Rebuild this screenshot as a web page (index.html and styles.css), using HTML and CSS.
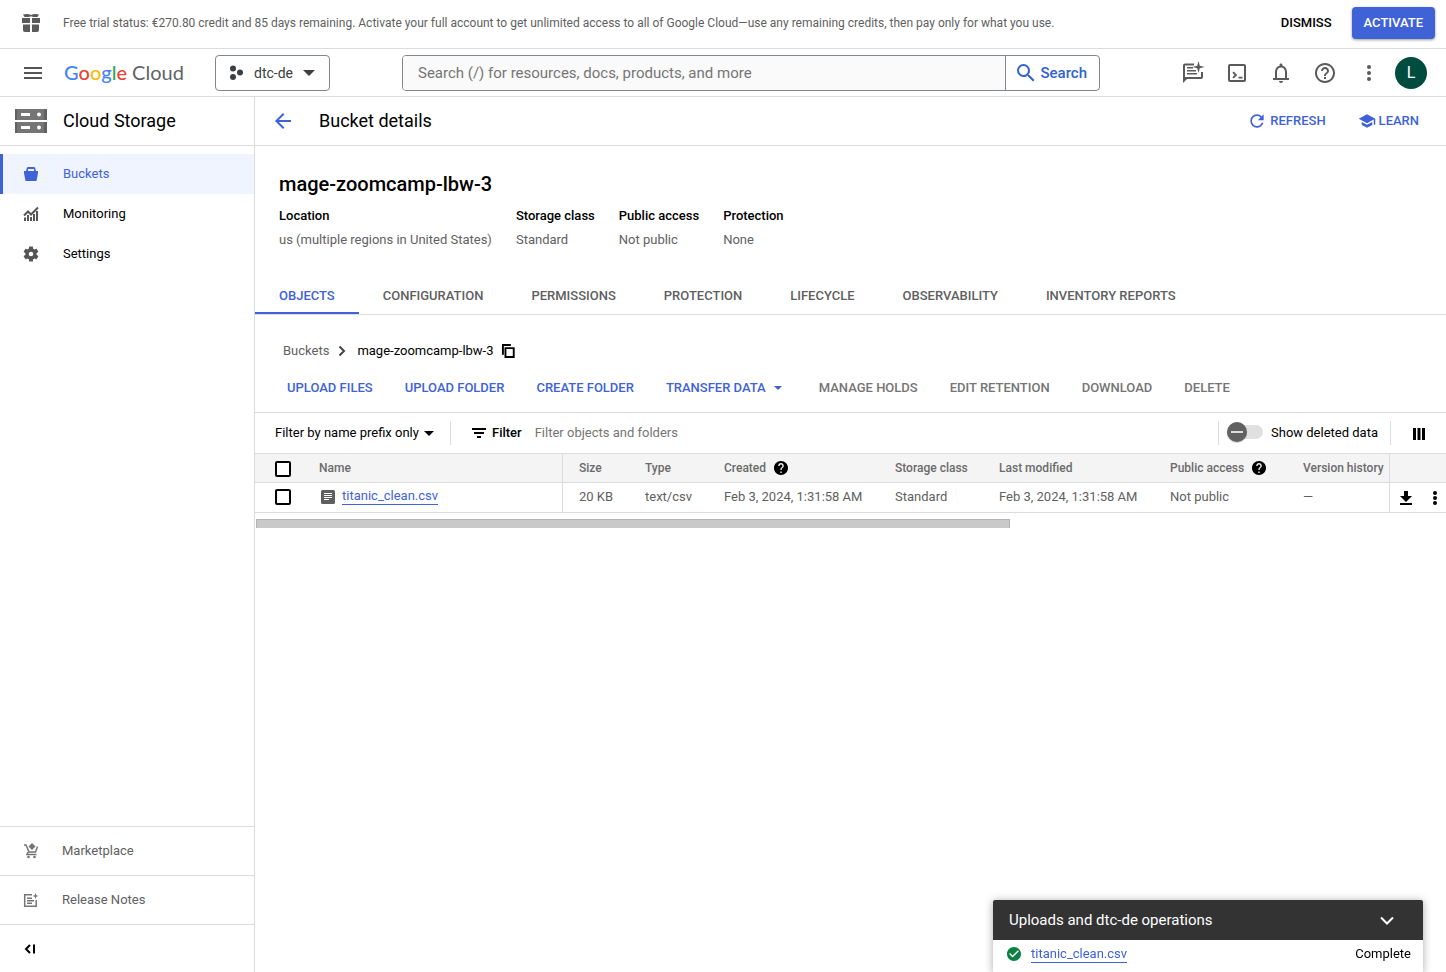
FILE: index.html
```
<!DOCTYPE html>
<html lang="en">
<head>
<meta charset="utf-8">
<title>Bucket details – Cloud Storage</title>
<link rel="stylesheet" href="styles.css">
</head>
<body>
<div class="trial">
  <svg class="trial-icon" viewBox="0 0 20 20" aria-hidden="true"><path d="M1 5h8v5H1zM11 5h8v5h-8zM2 11.500h7V19H4a2 2 0 0 1-2-2zM11 11.500h7V17a2 2 0 0 1-2 2h-5zM2 1.500C5 .6 8 .8 10 2 12 .8 15 .6 18 1.500L16.500 4C14 4.200 12 4 10 3.200 8 4 6 4.200 3.500 4z"/></svg>
  <p class="trial-text">Free trial status: €270.80 credit and 85 days remaining. Activate your full account to get unlimited access to all of Google Cloud—use any remaining credits, then pay only for what you use.</p>
  <button class="btn btn-dismiss" type="button">DISMISS</button>
  <button class="btn btn-activate" type="button">ACTIVATE</button>
</div>

<header class="topbar">
  <button class="icon-btn menu-btn" type="button" aria-label="Main menu"><svg class="i24" viewBox="0 0 24 24"><path d="M3 18h18v-2H3v2zm0-5h18v-2H3v2zm0-7v2h18V6H3z"/></svg></button>
  <a class="logo" href="#" aria-label="Google Cloud"><span class="g-blue">G</span><span class="g-red">o</span><span class="g-yellow">o</span><span class="g-blue">g</span><span class="g-green">l</span><span class="g-red">e</span> <span class="g-cloud">Cloud</span></a>
  <button class="project" type="button">
    <svg class="i16" viewBox="0 0 16 16"><circle cx="4" cy="3.500" r="3"/><circle cx="4" cy="12" r="3"/><circle cx="11" cy="7.500" r="3"/></svg>
    <span>dtc-de</span>
    <svg class="caret-lg" viewBox="0 0 12 6"><path d="M0 0h12L6 6z"/></svg>
  </button>
  <form class="search">
    <input class="search-input" type="text" aria-label="Search" placeholder="Search (/) for resources, docs, products, and more">
    <button class="search-btn" type="button"><svg class="i24" viewBox="0 0 24 24"><path d="M15.500 14h-.79l-.28-.27A6.470 6.470 0 0 0 16 9.500 6.500 6.500 0 1 0 9.500 16c1.610 0 3.090-.59 4.230-1.570l.27.28v.79l5 4.990L20.490 19l-4.990-5zm-6 0C7.010 14 5 11.990 5 9.500S7.010 5 9.500 5 14 7.010 14 9.500 11.990 14 9.500 14z"/></svg>Search</button>
  </form>
  <div class="tools">
    <button class="icon-btn" type="button" aria-label="Chat"><svg class="i24" viewBox="0 0 24 24"><path d="M13 2.500H4a2 2 0 0 0-2 2V22l4-4h14a2 2 0 0 0 2-2v-5h-2v5H4V4.500h9zM6 6h6v1.500H6zM6 9h9v1.500H6zM6 12h10v1.500H6zM17.500 0l1.300 4.700L23.500 6l-4.700 1.300L17.500 12l-1.300-4.700L11.500 6l4.700-1.300z"/></svg></button>
    <button class="icon-btn" type="button" aria-label="Cloud Shell"><svg class="i24" viewBox="0 0 24 24"><path d="M19 3H5a2 2 0 0 0-2 2v14a2 2 0 0 0 2 2h14a2 2 0 0 0 2-2V5a2 2 0 0 0-2-2zm0 16H5V5h14zM7.400 16.300 9.600 14l-2.200-2.300L8.800 10.500 12.200 14l-3.400 3.500zM13.500 15.800h4v1.700h-4z"/></svg></button>
    <button class="icon-btn" type="button" aria-label="Notifications"><svg class="i24" viewBox="0 0 24 24"><path d="M12 22c1.100 0 2-.9 2-2h-4c0 1.100.9 2 2 2zm6-5v-6c0-3.070-1.630-5.640-4.500-6.320V4c0-.83-.67-1.500-1.500-1.500s-1.500.67-1.500 1.500v.68C7.640 5.360 6 7.920 6 11v6H4v2h16v-2zm-2 0H8v-6c0-2.480 1.510-4.500 4-4.500s4 2.020 4 4.500v6z"/></svg></button>
    <button class="icon-btn" type="button" aria-label="Help"><svg class="i24" viewBox="0 0 24 24"><path d="M11 18h2v-2h-2v2zm1-16C6.480 2 2 6.480 2 12s4.480 10 10 10 10-4.480 10-10S17.520 2 12 2zm0 18c-4.410 0-8-3.590-8-8s3.590-8 8-8 8 3.590 8 8-3.590 8-8 8zm0-14c-2.210 0-4 1.790-4 4h2c0-1.100.9-2 2-2s2 .9 2 2c0 2-3 1.750-3 5h2c0-2.250 3-2.500 3-5 0-2.210-1.790-4-4-4z"/></svg></button>
    <button class="icon-btn" type="button" aria-label="More options"><svg class="i24" viewBox="0 0 24 24"><circle cx="12" cy="6" r="2"/><circle cx="12" cy="12" r="2"/><circle cx="12" cy="18" r="2"/></svg></button>
    <button class="avatar" type="button" aria-label="Account">L</button>
  </div>
</header>

<div class="shell">
  <aside class="side">
    <div class="side-head">
      <svg class="product-icon" viewBox="0 0 32 24" aria-hidden="true"><path fill="#757575" d="M0 0h32v11H0zM0 13h32v11H0z"/><path fill="#616161" d="M0 0h2v11H0zM0 13h2v11H0zM29 0h3v11h-3zM29 13h3v11h-3z"/><path fill="#fff" d="M6 4h9v3H6zM6 17h9v3H6z"/><circle fill="#fff" cx="24" cy="5.500" r="2"/><circle fill="#fff" cx="24" cy="18.500" r="2"/></svg>
      <h2 class="bar-title">Cloud Storage</h2>
    </div>
    <nav class="side-nav">
      <a class="side-link active" href="#"><svg class="i16" viewBox="0 0 16 16"><path d="M4 1.500 5 1h6l1 .5L13 5h2v2l-1.500 8h-11L1 7V5h2zM5 3v2h6V3z" fill-rule="evenodd"/></svg>Buckets</a>
      <a class="side-link" href="#"><svg class="i16" viewBox="0 0 16 16"><path d="M1 11.500h2V15H1zM4 9h2v6H4zM7 11h2v4H7zM10 8h2v7h-2zM13 5h2v10h-2z"/><path class="line2" d="M1 9.500 5 5.500l3 3 7-7"/></svg>Monitoring</a>
      <a class="side-link" href="#"><svg class="i18" viewBox="0 0 24 24"><path d="M19.430 12.980c.04-.32.07-.64.07-.98s-.03-.66-.07-.98l2.110-1.650c.19-.15.24-.42.12-.64l-2-3.460c-.12-.22-.39-.3-.61-.22l-2.490 1c-.52-.4-1.080-.73-1.690-.98l-.38-2.650A.49.49 0 0 0 14 2h-4c-.25 0-.46.18-.49.42l-.38 2.650c-.61.25-1.170.59-1.690.98l-2.490-1c-.23-.09-.49 0-.61.22l-2 3.460c-.13.22-.07.49.12.64l2.110 1.650c-.04.32-.07.65-.07.98s.03.66.07.98l-2.110 1.650c-.19.15-.24.42-.12.64l2 3.460c.12.22.39.3.61.22l2.490-1c.52.4 1.080.73 1.690.98l.38 2.650c.03.24.24.42.49.42h4c.25 0 .46-.18.49-.42l.38-2.650c.61-.25 1.170-.59 1.690-.98l2.490 1c.23.09.49 0 .61-.22l2-3.460c.12-.22.07-.49-.12-.64zM12 15a3 3 0 1 1 0-6 3 3 0 0 1 0 6z"/></svg>Settings</a>
    </nav>
    <div class="side-foot">
      <a class="foot-link" href="#"><svg class="i16" viewBox="0 0 16 16"><path class="line" d="M1 2h2l3 7h6.500l2-5.500M5 9l-1 2.500h9.500"/><circle cx="5.500" cy="14" r="1.300"/><circle cx="11.500" cy="14" r="1.300"/><path d="M9 0l3.500 3.500L9 7 5.500 3.500z"/></svg>Marketplace</a>
      <a class="foot-link" href="#"><svg class="i16" viewBox="0 0 16 16"><path class="line" d="M9 2.700H1.700v11.600h11.500V8"/><path d="M4 5.500h5V7H4zM4 8h7v1.500H4zM4 10.500h5V12H4zM12.500 1l.8 2.200 2.200.8-2.200.8-.8 2.200-.8-2.200L9.500 4l2.200-.8z"/></svg>Release Notes</a>
      <button class="foot-link collapse" type="button" aria-label="Collapse menu"><svg class="i16" viewBox="0 0 16 16"><path class="line2" d="M7 4 3 8l4 4M11 3.500v9"/></svg></button>
    </div>
  </aside>

  <main class="main">
    <div class="page-head">
      <button class="icon-btn back" type="button" aria-label="Back"><svg class="i24" viewBox="0 0 24 24"><path d="M20 11H7.830l5.590-5.590L12 4l-8 8 8 8 1.410-1.410L7.830 13H20v-2z"/></svg></button>
      <h1 class="bar-title">Bucket details</h1>
      <div class="page-tools">
        <button class="btn head-btn" type="button"><svg class="i20" viewBox="0 0 24 24"><path d="M17.650 6.350C16.200 4.900 14.210 4 12 4c-4.420 0-7.990 3.580-7.990 8s3.570 8 7.990 8c3.730 0 6.840-2.550 7.730-6h-2.080c-.82 2.330-3.040 4-5.650 4-3.310 0-6-2.690-6-6s2.690-6 6-6c1.660 0 3.140.69 4.220 1.780L13 11h7V4l-2.350 2.350z"/></svg>REFRESH</button>
        <button class="btn head-btn" type="button"><svg class="i18" viewBox="0 0 24 24"><path d="M5 13.180v4L12 21l7-3.820v-4L12 17l-7-3.820zM12 3L1 9l11 6 9-4.910V17h2V9L12 3z"/></svg>LEARN</button>
      </div>
    </div>

    <section class="summary">
      <h2 class="bucket-name">mage-zoomcamp-lbw-3</h2>
      <dl class="facts">
        <div><dt>Location</dt><dd>us (multiple regions in United States)</dd></div>
        <div><dt>Storage class</dt><dd>Standard</dd></div>
        <div><dt>Public access</dt><dd>Not public</dd></div>
        <div><dt>Protection</dt><dd>None</dd></div>
      </dl>
    </section>

    <nav class="tabs">
      <a class="tab active" href="#">OBJECTS</a>
      <a class="tab" href="#">CONFIGURATION</a>
      <a class="tab" href="#">PERMISSIONS</a>
      <a class="tab" href="#">PROTECTION</a>
      <a class="tab" href="#">LIFECYCLE</a>
      <a class="tab" href="#">OBSERVABILITY</a>
      <a class="tab" href="#">INVENTORY REPORTS</a>
    </nav>

    <div class="crumbs">
      <a class="crumb" href="#">Buckets</a>
      <svg class="chev" viewBox="0 0 8 12"><path class="line2" d="M1.500 1.500 6 6l-4.500 4.500"/></svg>
      <span>mage-zoomcamp-lbw-3</span>
      <button class="icon-btn copy" type="button" aria-label="Copy"><svg class="i14" viewBox="1 1 21 22"><path d="M16 1H2v17h3V4h11zM6 6v17h16V6zm3 3h10v11H9z" fill-rule="evenodd"/></svg></button>
    </div>

    <div class="actions">
      <button class="btn action" type="button">UPLOAD FILES</button>
      <button class="btn action" type="button">UPLOAD FOLDER</button>
      <button class="btn action" type="button">CREATE FOLDER</button>
      <button class="btn action" type="button">TRANSFER DATA<svg class="caret-sm" viewBox="0 0 8 4"><path d="M0 0h8L4 4z"/></svg></button>
      <button class="btn action" type="button" disabled>MANAGE HOLDS</button>
      <button class="btn action" type="button" disabled>EDIT RETENTION</button>
      <button class="btn action" type="button" disabled>DOWNLOAD</button>
      <button class="btn action" type="button" disabled>DELETE</button>
    </div>

    <div class="filterbar">
      <div class="prefix">
        <select class="prefix-select" aria-label="Filter mode"><option>Filter by name prefix only</option></select>
        <svg class="caret-md" viewBox="0 0 10 5"><path d="M0 0h10L5 5z"/></svg>
      </div>
      <label class="filter-label" for="filter"><svg class="i14" viewBox="0 0 14 12"><path d="M0 1h14v2H0zM2 5h10v2H2zM5 9h4v2H5z"/></svg>Filter</label>
      <input class="filter-input" id="filter" type="text" placeholder="Filter objects and folders">
      <label class="toggle"><input class="switch" type="checkbox">Show deleted data</label>
      <button class="icon-btn columns" type="button" aria-label="Column display options"><svg class="i12" viewBox="0 0 12 12"><path d="M0 0h3v12H0zM4.500 0h3v12h-3zM9 0h3v12H9z"/></svg></button>
    </div>

    <table class="grid">
      <colgroup><col class="c-check"><col><col class="c-size"><col class="c-type"><col class="c-date"><col class="c-class"><col class="c-date"><col class="c-access"><col class="c-version"><col class="c-act"></colgroup>
      <thead>
        <tr>
          <th class="check-cell"><input class="check" type="checkbox" aria-label="Select all"></th>
          <th class="name-cell">Name</th><th>Size</th><th>Type</th>
          <th><span class="with-help">Created <svg class="i16" viewBox="2 2 20 20"><path d="M12 2C6.480 2 2 6.480 2 12s4.480 10 10 10 10-4.480 10-10S17.520 2 12 2zm1 17h-2v-2h2v2zm2.070-7.750l-.9.92C13.450 12.900 13 13.500 13 15h-2v-.5c0-1.100.45-2.100 1.170-2.830l1.240-1.260c.37-.36.59-.86.59-1.410 0-1.100-.9-2-2-2s-2 .9-2 2H8c0-2.210 1.790-4 4-4s4 1.790 4 4c0 .88-.36 1.680-.93 2.250z"/></svg></span></th>
          <th>Storage class</th><th>Last modified</th>
          <th><span class="with-help">Public access <svg class="i16" viewBox="2 2 20 20"><path d="M12 2C6.480 2 2 6.480 2 12s4.480 10 10 10 10-4.480 10-10S17.520 2 12 2zm1 17h-2v-2h2v2zm2.070-7.750l-.9.92C13.450 12.900 13 13.500 13 15h-2v-.5c0-1.100.45-2.100 1.170-2.830l1.240-1.260c.37-.36.59-.86.59-1.410 0-1.100-.9-2-2-2s-2 .9-2 2H8c0-2.210 1.790-4 4-4s4 1.790 4 4c0 .88-.36 1.680-.93 2.250z"/></svg></span></th>
          <th class="last-cell">Version history</th><th></th>
        </tr>
      </thead>
      <tbody>
        <tr>
          <td class="check-cell"><input class="check" type="checkbox" aria-label="Select titanic_clean.csv"></td>
          <td class="name-cell"><span class="file"><svg class="i14" viewBox="0 0 14 14"><rect width="14" height="14" rx="1.500"/><path fill="#fff" d="M3 3h8v1H3zM3 5h8v1H3zM3 7h8v1H3zM3 9h5v1H3z"/></svg><a class="link" href="#">titanic_clean.csv</a></span></td>
          <td>20 KB</td><td>text/csv</td><td>Feb 3, 2024, 1:31:58 AM</td><td>Standard</td><td>Feb 3, 2024, 1:31:58 AM</td><td>Not public</td><td class="last-cell">—</td>
          <td class="act-cell"><span class="acts"><button class="icon-btn" type="button" aria-label="Download"><svg class="i14" viewBox="0 0 14 14"><path d="M5 0h4v5h4l-6 6-6-6h4zM1 12h12v2H1z"/></svg></button><button class="icon-btn" type="button" aria-label="More actions"><svg class="dots" viewBox="0 0 4 14"><circle cx="2" cy="2" r="2"/><circle cx="2" cy="7" r="2"/><circle cx="2" cy="12" r="2"/></svg></button></span></td>
        </tr>
      </tbody>
    </table>
    <div class="hscroll"><div class="hthumb"></div></div>
  </main>
</div>

<section class="ops" aria-label="Operations">
  <div class="ops-head"><h2 class="ops-title">Uploads and dtc-de operations</h2><button class="icon-btn" type="button" aria-label="Minimize"><svg class="ops-chev" viewBox="0 0 14 9"><path class="line2" d="M1 1.500l6 6 6-6"/></svg></button></div>
  <div class="ops-row"><svg class="ok" viewBox="2 2 20 20"><path d="M12 2C6.480 2 2 6.480 2 12s4.480 10 10 10 10-4.480 10-10S17.520 2 12 2zm-2 15l-5-5 1.410-1.410L10 14.170l7.590-7.590L19 8l-9 9z"/></svg><a class="link" href="#">titanic_clean.csv</a><span class="ops-state">Complete</span></div>
</section>
</body>
</html>
```
FILE: styles.css
```
* { box-sizing: border-box; }
body {
  margin: 0;
  min-height: 100vh;
  display: flex;
  flex-direction: column;
  background: #fff;
  color: #000;
  font: 13px/20px Roboto, "Liberation Sans", sans-serif;
}
h1, h2, p, dl, dd { margin: 0; }
a { color: inherit; text-decoration: none; }
button, input, select { font: inherit; color: inherit; }
button { border: 0; padding: 0; background: none; }
svg { display: block; flex: none; fill: currentColor; }
.line, .line2 { fill: none; stroke: currentColor; stroke-width: 1.5; }
.line2 { stroke-width: 2; }
.i12 { width: 12px; height: 12px; }
.i14 { width: 14px; height: 14px; }
.i16 { width: 16px; height: 16px; }
.i18 { width: 18px; height: 18px; }
.i20 { width: 20px; height: 20px; }
.i24 { width: 24px; height: 24px; }
.icon-btn { display: flex; align-items: center; justify-content: center; }
.btn { font-weight: 500; white-space: nowrap; }

.trial {
  display: flex;
  align-items: center;
  height: 49px;
  padding: 0 11px 3px 21px;
  border-bottom: 1px solid #dadce0;
}
.trial-icon { width: 20px; height: 20px; color: #5a5a5a; }
.trial-text { flex: 1; margin-left: 22px; font-size: 12px; color: #5f5f5f; }
.btn-dismiss { padding: 0 20px; }
.btn-activate {
  height: 32px;
  padding: 0 12px;
  border-radius: 4px;
  background: #3f62d7;
  color: #fff;
  box-shadow: 0 1px 3px rgba(0, 0, 0, .4);
}

.topbar {
  display: flex;
  align-items: center;
  height: 48px;
  padding: 0 19px 0 21px;
  border-bottom: 1px solid #dadce0;
}
.menu-btn { color: #555; }
.logo { width: 151px; padding: 0 0 2px 19px; font: 500 20px/24px Lato, sans-serif; white-space: nowrap; }
.g-blue { color: #4285f4; }
.g-red { color: #ea4335; }
.g-yellow { color: #fbbc04; }
.g-green { color: #34a853; }
.g-cloud { color: #5f6368; font-weight: 400; }
.project {
  display: flex;
  align-items: center;
  gap: 9px;
  height: 36px;
  margin-left: 19px;
  padding: 0 14px 0 13px;
  border: 1px solid #80868b;
  border-radius: 4px;
  font-size: 14px;
  color: #3c4043;
}
.caret-lg { width: 12px; height: 6px; margin-left: 1px; }
.search {
  display: flex;
  flex: 0 1 698px;
  height: 36px;
  margin-left: 72px;
  border: 1px solid #80868b;
  border-radius: 4px;
  overflow: hidden;
}
.search-input { flex: 1; min-width: 0; padding: 0 15px; border: 0; background: #fafafa; font-size: 15px; }
.search-input::placeholder, .filter-input::placeholder { color: #757575; opacity: 1; }
.search-btn {
  display: flex;
  align-items: center;
  gap: 2px;
  padding: 0 12px 0 8px;
  border-left: 1px solid #80868b;
  font-size: 15px;
  font-weight: 500;
  color: #2f62d0;
}
.tools { display: flex; align-items: center; gap: 20px; margin-left: auto; color: #5a5a5a; }
.avatar { width: 32px; height: 32px; margin-left: -6px; border-radius: 50%; background: #004d40; color: #fff; font-size: 16px; }

.shell { display: grid; grid-template-columns: 255px minmax(0, 1fr); flex: 1; }
.side { display: flex; flex-direction: column; border-right: 1px solid #dadce0; }
.side-head, .page-head { display: flex; align-items: center; height: 49px; border-bottom: 1px solid #dadce0; }
.side-head { gap: 16px; padding-left: 15px; }
.product-icon { width: 32px; height: 24px; }
.bar-title { font-size: 18px; line-height: 24px; font-weight: 400; }
.side-nav { padding-top: 8px; }
.side-link { display: grid; grid-template-columns: 20px auto; justify-content: start; justify-items: center; align-items: center; gap: 22px; height: 40px; padding-left: 21px; }
.side-link svg { color: #555; }
.side-link.active { padding-left: 18px; border-left: 3px solid #3f62d7; background: #eff4fe; color: #3f62d7; }
.side-link.active svg { color: inherit; }
.side-foot { margin-top: auto; color: #616161; }
.foot-link { display: flex; align-items: center; gap: 23px; width: 100%; height: 49px; padding-left: 23px; border-top: 1px solid #dadce0; }
.foot-link svg { color: #757575; }
.foot-link.collapse { height: 48px; }
.foot-link.collapse svg { color: #000; }

.page-head { padding: 0 27px 0 16px; }
.back { margin-right: 24px; }
.back, .head-btn { color: #3f62d7; }
.page-tools { display: flex; gap: 32px; margin-left: auto; }
.head-btn { display: flex; align-items: center; gap: 3px; }

.summary { padding: 26px 24px 0; }
.bucket-name { font-size: 20px; line-height: 24px; font-weight: 500; }
.facts { display: flex; gap: 24px; margin-top: 10px; }
.facts dt { font-weight: 500; margin-bottom: 4px; }
.facts dd { color: #616161; }

.tabs { display: flex; margin-top: 27px; border-bottom: 1px solid #dadce0; }
.tab { padding: 9px 24px 6px; border-bottom: 2px solid transparent; font-weight: 500; color: #5f5f5f; }
.tab.active { color: #3f62d7; border-color: #3f62d7; }

.crumbs { display: flex; align-items: center; gap: 7px; padding: 26px 28px 0; }
.crumb { color: #616161; }
.chev { width: 8px; height: 12px; margin: 0 4px 0 2px; color: #444; }
.actions { display: flex; gap: 32px; padding: 17px 32px 14px; border-bottom: 1px solid #dadce0; color: #3f62d7; }
.action { display: flex; align-items: center; gap: 8px; }
.action:disabled { color: #757575; }
.caret-sm { width: 8px; height: 4px; margin-right: 5px; }

.filterbar { display: flex; align-items: center; height: 41px; padding-left: 20px; border-bottom: 1px solid #dadce0; }
.prefix { display: flex; align-items: center; gap: 5px; height: 24px; padding-right: 16px; border-right: 1px solid #dadce0; }
.prefix-select { appearance: none; border: 0; padding: 0; background: none; }
.caret-md { width: 10px; height: 5px; }
.filter-label { display: flex; align-items: center; gap: 6px; margin-left: 21px; font-weight: 500; }
.filter-input { flex: 1; min-width: 0; margin-left: 13px; padding: 0; border: 0; }
.toggle { display: flex; align-items: center; gap: 8px; height: 24px; padding: 0 12px 0 8px; border: solid #dadce0; border-width: 0 1px; }
.switch { appearance: none; position: relative; width: 36px; height: 14px; margin: 0 0 2px; border-radius: 7px; background: #e0e0e0; }
.switch::before { content: ""; position: absolute; left: 0; top: -3px; width: 20px; height: 20px; border-radius: 50%; background: #616161; box-shadow: 0 1px 1px rgba(0, 0, 0, .2); }
.switch::after { content: ""; position: absolute; left: 4px; top: 6px; width: 12px; height: 2px; background: #ddd; }
.columns { width: 55px; padding-top: 2px; }

.grid { width: 100%; table-layout: fixed; border-collapse: separate; border-spacing: 0; color: #5f5f5f; }
.grid th, .grid td { padding: 0 0 0 16px; border-bottom: 1px solid #dadce0; text-align: left; white-space: nowrap; }
.grid th { height: 29px; background: #f4f4f4; font-size: 12px; font-weight: 500; color: #6b6b6b; }
.grid td { height: 30px; padding-bottom: 2px; }
.grid .check-cell { padding-left: 20px; }
.grid th.check-cell { padding-top: 2px; }
.grid .name-cell, .grid .last-cell { border-right: 1px solid #dadce0; }
.c-check { width: 48px; }
.c-size { width: 66px; }
.c-type { width: 79px; }
.c-date { width: 171px; }
.c-class { width: 104px; }
.c-access { width: 133px; }
.c-version { width: 103px; }
.c-act { width: 56px; }
.check { appearance: none; display: block; width: 16px; height: 16px; margin: 0; border: 2px solid #000; border-radius: 2px; background: #fff; }
.with-help, .file { display: flex; align-items: center; gap: 8px; }
.with-help svg { width: 14px; height: 14px; color: #000; }
.file { gap: 7px; padding-left: 2px; }
.link { color: #3f62d7; line-height: 16px; border-bottom: 1px solid #3f62d7; }
.grid .act-cell { padding: 0 0 0 9px; }
.acts { display: flex; justify-content: space-between; padding-right: 9px; color: #000; }
.dots { width: 4px; height: 14px; }
.hscroll { padding: 6px 0 0 1px; }
.hthumb { width: 63.4%; height: 9px; border: 1px solid #b3b3b3; border-bottom: 0; background: #c9c9c9; }

.ops { position: fixed; right: 23px; bottom: 0; width: 430px; border-radius: 2px 2px 0 0; background: #fff; box-shadow: 0 1px 8px rgba(0, 0, 0, .35); overflow: hidden; }
.ops-head { display: flex; align-items: center; justify-content: space-between; height: 40px; padding: 0 29px 0 16px; background: #333; color: #fff; }
.ops-title { font-size: 15px; font-weight: 400; }
.ops-chev { width: 14px; height: 9px; }
.ops-row { display: flex; align-items: center; gap: 10px; height: 32px; padding: 0 12px 4px 14px; }
.ok { width: 14px; height: 14px; color: #0b8043; }
.ops-state { margin-left: auto; }
```
